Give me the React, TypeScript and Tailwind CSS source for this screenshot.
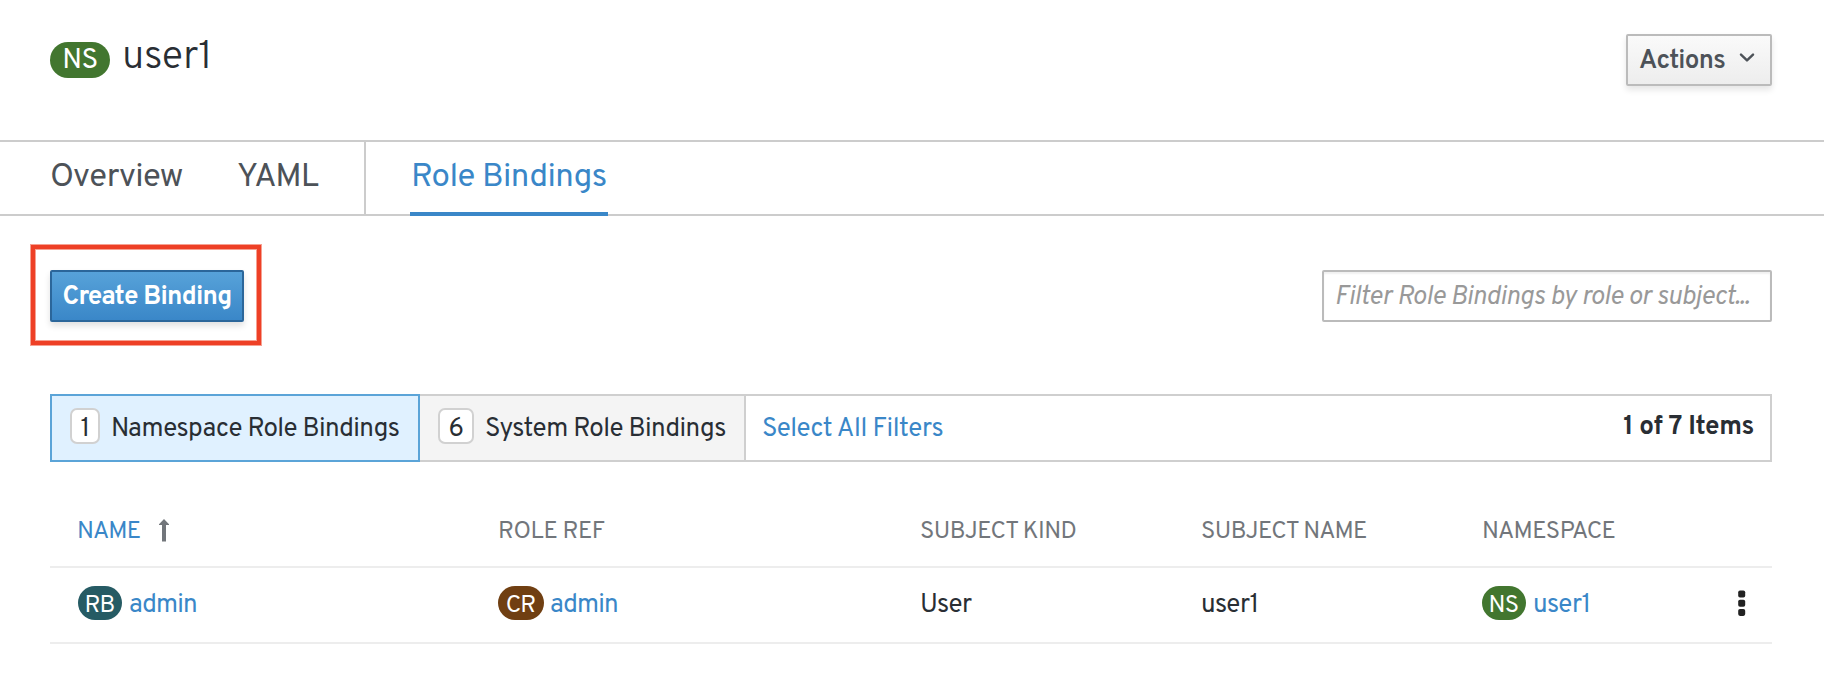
import type { ReactNode } from "react";

const FONT = "font-['Overpass','Roboto',sans-serif]";

function Badge({ label, className }: { label: string; className: string }) {
  return (
    <span className={`flex h-[34px] items-center justify-center rounded-full text-[24px] leading-none tracking-[-0.8px] text-white ${className}`}>
      <span className="relative top-[3px] right-[0.5px]">{label}</span>
    </span>
  );
}

function Count({ value, className }: { value: number; className: string }) {
  return (
    <span className={`flex h-9 items-center justify-center rounded-[7px] border-2 border-[#d1d1d1] bg-white ${className}`}>
      <span className="relative top-1">{value}</span>
    </span>
  );
}

function Tab({ children, className }: { children: ReactNode; className: string }) {
  return <a className={`flex h-[76px] items-start border-b-4 text-[33px] leading-none whitespace-nowrap ${className}`}>{children}</a>;
}

export default function App() {
  return (
    <div className={`${FONT} h-[686px] w-[1824px] overflow-hidden bg-white text-[26px] leading-none tracking-[-0.6px] text-[#292e34]`}>
      <header className="flex h-[140px] items-start justify-between pr-[52px] pl-[50px]">
        <h1 className="flex pt-[34px]">
          <span className="mt-2 flex h-9 w-[60px] items-center justify-center rounded-full bg-[#42762f] text-[28px] text-white">
            <span className="relative top-px">NS</span>
          </span>
          <span className="ml-3 pt-1 text-[40px] font-light tracking-[-0.4px]">user1</span>
        </h1>
        <button className="mt-[34px] flex h-[52px] w-[146px] items-center justify-between rounded-[2px] border-2 border-[#bbbbbb] bg-linear-to-b from-[#fafafa] to-[#ededed] pr-[15px] pl-[11px] font-semibold text-[#4d5258] shadow-[0_4px_6px_rgba(3,3,3,0.1)]">
          <span className="pt-[3px]">Actions</span>
          <svg width="16" height="10" viewBox="0 0 16 10" className="mb-1" fill="none" stroke="currentColor" strokeWidth="2.4" strokeLinecap="round" strokeLinejoin="round">
            <path d="M2 1.6 8 7.4l6-5.8" />
          </svg>
        </button>
      </header>

      <nav className="flex h-[76px] border-y-2 border-[#cccccc] text-[#4d5258]">
        <div className="flex w-[366px] border-r-2 border-[#cccccc] pl-[50px]">
          <Tab className="w-[187px] border-transparent pt-5 tracking-[-0.65px]">Overview</Tab>
          <Tab className="border-transparent pt-5 tracking-[-0.9px]">YAML</Tab>
        </div>
        <Tab className="-mt-0.5 ml-11 w-[198px] border-[#3a87c8] pt-[22px] pl-px tracking-[-0.55px] text-[#3a87c8]">Role Bindings</Tab>
      </nav>

      <div className="flex justify-between pt-[29px] pr-[52px] pl-[31px]">
        <div className="h-[100px] w-[230px] border-4 border-[#ee4026] pt-[21px] pl-[15px] shadow-[0_0_0_1px_#f6a192,inset_0_0_0_1px_#f6a192]">
          <button className="flex h-[52px] w-[194px] items-center justify-center rounded-[2px] border-2 border-[#2b669a] bg-linear-to-b from-[#57a2d9] to-[#3a87c8] pt-[3px] font-bold tracking-[-0.8px] text-white shadow-[0_4px_6px_rgba(3,3,3,0.12)]">
            Create Binding
          </button>
        </div>
        <div className="mt-[25px] flex h-[52px] w-[450px] items-center rounded-[2px] border-2 border-[#bbbbbb] pt-[3px] pl-[10.5px] tracking-[-0.43px] text-[#999999] italic shadow-[inset_0_2px_2px_rgba(3,3,3,0.06)]">
          Filter Role Bindings by role or subject...
        </div>
      </div>

      <div className="mt-[49px] mr-[52px] ml-[50px] flex h-[68px] border-y-2 border-r-2 border-[#cfcfcf]">
        <div className="-my-0.5 flex w-[370px] items-start border-2 border-[#5ba4d8] bg-[#e0f1ff] pt-3 pl-[18px]">
          <Count value={1} className="w-[30px]" />
          <span className="ml-[11px] pt-[9px]">Namespace Role Bindings</span>
        </div>
        <div className="flex w-[326px] items-start border-r-2 border-[#cfcfcf] bg-[#f4f4f4] pt-3 pl-[18px]">
          <Count value={6} className="w-9" />
          <span className="ml-[11px] pt-[9px] tracking-[-0.56px]">System Role Bindings</span>
        </div>
        <span className="pt-[21px] pl-[16px] tracking-[-0.45px] text-[#3a87c8]">Select All Filters</span>
        <span className="mr-4 ml-auto pt-[19px] font-bold tracking-[-0.42px]">1 of 7 Items</span>
      </div>

      <div className="mr-[52px] ml-[50px] grid h-[106px] grid-cols-[422px_421px_281px_281px_1fr] items-start border-b-2 border-[#ededed] pt-[58px] pl-[27px] text-[24px] text-[#72767b]">
        <span className="flex text-[#3a87c8]">
          <span className="w-[81px]">NAME</span>
          <svg width="12" height="24" viewBox="0 0 12 24" className="-mt-px" fill="#72767b">
            <path d="M6 0 11 5.2v.8H8v16.6H4V6H1v-.8z" />
          </svg>
        </span>
        <span className="-ml-px tracking-[-0.45px]">ROLE REF</span>
        <span className="tracking-[-0.55px]">SUBJECT KIND</span>
        <span className="tracking-[-0.6px]">SUBJECT NAME</span>
        <span className="tracking-[-0.45px]">NAMESPACE</span>
      </div>

      <div className="mr-[52px] ml-[50px] grid h-[76px] grid-cols-[420px_423px_281px_280px_1fr] items-start border-b-2 border-[#ededed] pt-[18px] pl-7">
        <span className="flex text-[#3a87c8]">
          <Badge label="RB" className="w-11 bg-[#265b64]" />
          <span className="ml-[7px] pt-[7px] tracking-[-0.8px]">admin</span>
        </span>
        <span className="flex text-[#3a87c8]">
          <Badge label="CR" className="w-[46px] bg-[#703f12]" />
          <span className="ml-[6px] pt-[7px] tracking-[-0.8px]">admin</span>
        </span>
        <span className="-ml-px pt-[7px]">User</span>
        <span className="-ml-px pt-[7px]">user1</span>
        <span className="flex text-[#3a87c8]">
          <Badge label="NS" className="w-11 bg-[#42762f]" />
          <span className="ml-[7px] pt-[7px]">user1</span>
          <svg width="8" height="26" viewBox="0 0 8 26" className="mt-1 mr-[26px] ml-auto" fill="#222222">
            <rect x="0.2" y="0.5" width="7" height="7" rx="1.8" />
            <rect x="0.2" y="9.7" width="7" height="7" rx="1.8" />
            <rect x="0.2" y="18.9" width="7" height="7" rx="1.8" />
          </svg>
        </span>
      </div>
    </div>
  );
}
